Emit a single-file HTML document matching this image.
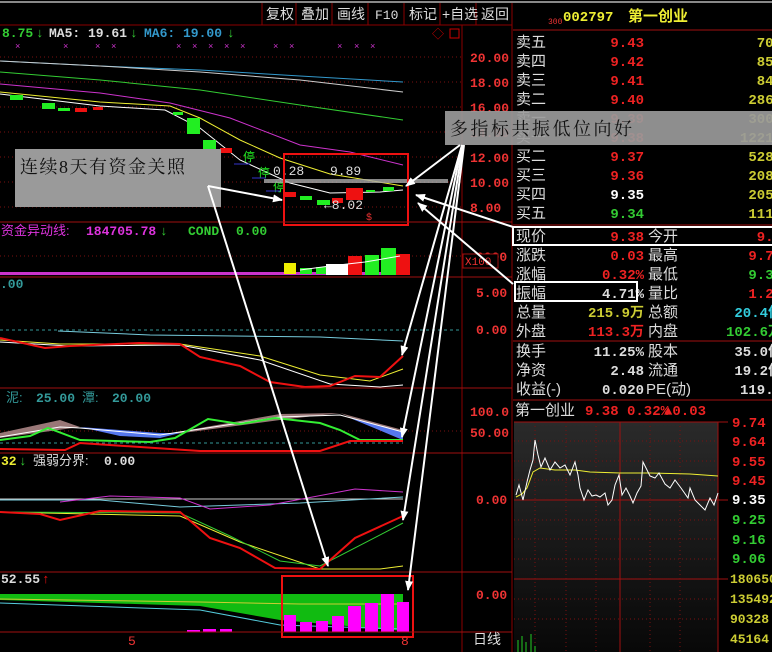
<!DOCTYPE html>
<html><head><meta charset="utf-8"><style>
html,body{margin:0;padding:0;background:#000;width:772px;height:652px;overflow:hidden}
svg{display:block;font-family:"Liberation Mono","Noto Sans CJK SC",monospace}
.c{font-family:"Liberation Sans","Noto Sans CJK SC",sans-serif}
</style></head><body>
<svg width="772" height="652" viewBox="0 0 772 652" font-size="13" xmlns="http://www.w3.org/2000/svg">
<rect width="772" height="652" fill="#000"/>
<line x1="0" y1="2" x2="772" y2="2" stroke="#888" stroke-width="2"/>
<line x1="0" y1="25" x2="512" y2="25" stroke="#8b0000"/>
<g stroke="#8b0000"><line x1="262" y1="3" x2="262" y2="25"/><line x1="296" y1="3" x2="296" y2="25"/><line x1="332" y1="3" x2="332" y2="25"/><line x1="368" y1="3" x2="368" y2="25"/><line x1="404" y1="3" x2="404" y2="25"/><line x1="440" y1="3" x2="440" y2="25"/><line x1="476" y1="3" x2="476" y2="25"/><line x1="512" y1="3" x2="512" y2="652"/><line x1="462" y1="25" x2="462" y2="652"/></g>
<g fill="#ddd" font-size="14"><text x="266" y="19" class="c">复权</text><text x="301" y="19" class="c">叠加</text><text x="337" y="19" class="c">画线</text><text x="375" y="19" font-size="13">F10</text><text x="409" y="19" class="c">标记</text><text x="442" y="19" class="c">+自选</text><text x="481" y="19" class="c">返回</text></g>
<text x="2" y="37" fill="#3c3" font-weight="bold">8.75</text><text x="36" y="37" fill="#3c3">↓</text>
<text x="49" y="37" fill="#ddd" font-weight="bold">MA5: 19.61</text><text x="130" y="37" fill="#3c3">↓</text>
<text x="144" y="37" fill="#39c" font-weight="bold">MA6: 19.00</text><text x="227" y="37" fill="#3c3">↓</text>
<text x="432" y="38" fill="#c00" font-size="12">◇</text><rect x="450" y="29" width="9" height="9" fill="none" stroke="#c00"/>
<g fill="#c3c" font-size="9"><text x="15" y="49">×</text><text x="63" y="49">×</text><text x="95" y="49">×</text><text x="111" y="49">×</text><text x="176" y="49">×</text><text x="192" y="49">×</text><text x="208" y="49">×</text><text x="224" y="49">×</text><text x="240" y="49">×</text><text x="273" y="49">×</text><text x="289" y="49">×</text><text x="337" y="49">×</text><text x="354" y="49">×</text><text x="370" y="49">×</text></g>
<g stroke="#7a1010" stroke-dasharray="1,3"><line x1="0" y1="57" x2="462" y2="57"/><line x1="0" y1="82" x2="462" y2="82"/><line x1="0" y1="107" x2="462" y2="107"/><line x1="0" y1="132" x2="462" y2="132"/><line x1="0" y1="157" x2="462" y2="157"/><line x1="0" y1="182" x2="462" y2="182"/><line x1="0" y1="207" x2="462" y2="207"/></g>
<g fill="#e33" font-weight="bold"><text x="470" y="62">20.00</text><text x="470" y="87">18.00</text><text x="470" y="112">16.00</text><text x="470" y="137">14.00</text><text x="470" y="162">12.00</text><text x="470" y="187">10.00</text><text x="470" y="212">8.00</text></g>
<polyline points="0,61 100,66 200,70 300,76 403,82" fill="none" stroke="#39c"/>
<polyline points="0,61 100,66 200,72 300,80 403,92" fill="none" stroke="#ccc"/>
<polyline points="0,72 100,80 200,90 300,105 403,120" fill="none" stroke="#3c3"/>
<polyline points="0,84 100,93 170,103 230,118 300,145 350,152 403,165" fill="none" stroke="#c3c"/>
<polyline points="0,92 100,102 170,106 200,118 240,140 280,158 330,174 403,186" fill="none" stroke="#ee3"/>
<polyline points="0,94 100,106 165,110 200,128 240,160 290,183 330,193 380,192 403,190" fill="none" stroke="#fff"/>
<g fill="#2e2"><rect x="10" y="95" width="13" height="5"/><rect x="42" y="103" width="13" height="6"/><rect x="58" y="108" width="12" height="3"/><rect x="187" y="118" width="13" height="16"/><rect x="203" y="140" width="13" height="10"/><rect x="173" y="112" width="10" height="3"/><rect x="300" y="196" width="12" height="4"/><rect x="317" y="200" width="13" height="5"/><rect x="383" y="187" width="11" height="4"/><rect x="366" y="190" width="9" height="2"/></g>
<g fill="#e11"><rect x="75" y="108" width="12" height="4"/><rect x="93" y="107" width="10" height="3"/><rect x="220" y="148" width="12" height="5"/><rect x="284" y="192" width="12" height="5"/><rect x="332" y="198" width="11" height="5"/><rect x="346" y="188" width="17" height="12"/></g>
<g fill="#2e2" font-size="12"><text x="243" y="161" class="c">停</text><text x="258" y="177" class="c">停</text><text x="273" y="191" class="c">停</text></g>
<line x1="234" y1="164" x2="250" y2="164" stroke="#33c"/><line x1="252" y1="178" x2="266" y2="178" stroke="#33c"/><line x1="266" y1="191" x2="280" y2="191" stroke="#33c"/>
<rect x="264" y="179" width="184" height="4" fill="#aaa" opacity=".8"/>
<text x="273" y="175" fill="#ddd">0.28</text><text x="330" y="175" fill="#ddd">9.89</text><text x="324" y="209" fill="#ddd">←8.02</text>
<text x="366" y="220" fill="#e33" font-size="10">$</text>
<rect x="284" y="154" width="124" height="71" fill="none" stroke="#e11" stroke-width="2"/>
<line x1="0" y1="222" x2="512" y2="222" stroke="#a01010"/>
<text x="1" y="235" fill="#d3d" class="c">资金异动线:</text><text x="86" y="235" fill="#d3d" font-weight="bold">184705.78</text><text x="160" y="235" fill="#3c3">↓</text>
<text x="188" y="235" fill="#3c3" font-weight="bold">COND</text><text x="236" y="235" fill="#3c3" font-weight="bold">0.00</text>
<line x1="0" y1="256" x2="462" y2="256" stroke="#7a1010" stroke-dasharray="1,3"/>
<rect x="0" y="272" width="405" height="3" fill="#c3c"/>
<rect x="284" y="263" width="12" height="11" fill="#ee0"/><rect x="300" y="268" width="12" height="6" fill="#2e2"/><rect x="316" y="267" width="12" height="7" fill="#2e2"/><rect x="326" y="264" width="24" height="11" fill="#fff"/><rect x="348" y="256" width="14" height="19" fill="#e11"/><rect x="365" y="255" width="14" height="20" fill="#2e2"/><rect x="381" y="248" width="15" height="27" fill="#2e2"/><rect x="396" y="254" width="14" height="21" fill="#e11"/>
<polyline points="300,270 330,266 365,262 400,256" fill="none" stroke="#fff"/>
<text x="476" y="261" fill="#e33" font-weight="bold">0000</text>
<rect x="463" y="254" width="35" height="14" fill="#000" stroke="#a01010"/><text x="465" y="265" fill="#e33" font-size="11">X100</text>
<line x1="0" y1="277" x2="512" y2="277" stroke="#a01010"/>
<text x="0" y="288" fill="#399" font-weight="bold">.00</text>
<text x="476" y="297" fill="#e33" font-weight="bold">5.00</text><text x="476" y="334" fill="#e33" font-weight="bold">0.00</text>
<line x1="0" y1="330" x2="462" y2="330" stroke="#399" stroke-dasharray="3,3"/>
<polyline points="58,331 150,335 320,337 403,341" fill="none" stroke="#7cd"/>
<polyline points="0,340 60,344 180,344 260,356 320,375 370,381 403,369" fill="none" stroke="#ee3"/>
<polyline points="0,342 70,346 180,345 260,360 330,384 380,387 403,385" fill="none" stroke="#fff"/>
<polyline points="0,338 45,348 70,346 140,343 180,344 200,357 240,366 270,382 305,387 330,386 355,376 380,377 403,356" fill="none" stroke="#e11" stroke-width="2"/>
<line x1="0" y1="388" x2="512" y2="388" stroke="#a01010"/>
<text x="6" y="402" fill="#399" class="c">泥:</text><text x="36" y="402" fill="#399" font-weight="bold">25.00</text><text x="82" y="402" fill="#399" class="c">潭:</text><text x="112" y="402" fill="#399" font-weight="bold">20.00</text>
<text x="470" y="416" fill="#e33" font-weight="bold">100.0</text><text x="470" y="437" fill="#e33" font-weight="bold">50.00</text>
<line x1="0" y1="431" x2="462" y2="431" stroke="#7a1010" stroke-dasharray="1,3"/>
<polygon points="0,433 60,420 80,427 160,435 280,414 340,413 403,430 403,440 340,413 280,420 160,436 80,427 0,438" fill="#977"/>
<polygon points="80,427 120,436 160,438 180,433 160,433" fill="#57e"/>
<polygon points="340,415 403,432 403,440 345,416" fill="#57e"/>
<polyline points="0,437 60,427 80,428 160,435 280,417 340,415 403,432" fill="none" stroke="#fff"/>
<polyline points="0,440 30,436 48,428 80,440 150,442 175,438 208,419 240,424 275,418 320,423 340,430 360,440 403,440" fill="none" stroke="#3e3" stroke-width="2"/>
<line x1="0" y1="443" x2="403" y2="443" stroke="#399" stroke-dasharray="3,3"/>
<polyline points="0,449 65,450 80,443 200,451 320,451 350,441 403,441" fill="none" stroke="#e11" stroke-width="2"/>
<line x1="0" y1="453" x2="512" y2="453" stroke="#a01010"/>
<text x="1" y="465" fill="#ee3" font-weight="bold">32</text><text x="19" y="465" fill="#3c3">↓</text><text x="33" y="465" fill="#ddd" class="c">强弱分界:</text><text x="104" y="465" fill="#ddd" font-weight="bold">0.00</text>
<text x="476" y="504" fill="#e33" font-weight="bold">0.00</text>
<line x1="0" y1="499" x2="403" y2="499" stroke="#ccc"/>
<polyline points="0,500 100,500 180,507 300,503 403,497" fill="none" stroke="#7cd"/>
<polyline points="60,502 110,496 180,498 210,509 270,505 355,489 403,492" fill="none" stroke="#c3c"/>
<polyline points="0,512 180,516 240,542 320,569 340,569 380,569 403,566" fill="none" stroke="#ee3"/>
<polyline points="0,512 180,513 230,536 280,561 320,566 403,523" fill="none" stroke="#3c3"/>
<polyline points="0,512 40,514 60,520 100,511 180,512 210,538 240,548 275,568 320,569 355,538 403,516" fill="none" stroke="#e11" stroke-width="2"/>
<line x1="0" y1="572" x2="512" y2="572" stroke="#a01010"/>
<text x="1" y="583" fill="#ddd" font-weight="bold">52.55</text><text x="42" y="583" fill="#e11">↑</text>
<text x="476" y="599" fill="#e33" font-weight="bold">0.00</text>
<polygon points="0,594 403,594 403,631 280,620 200,606 0,600" fill="#1b1"/>
<polyline points="0,599 200,602 300,604 403,604" fill="none" stroke="#cc3"/>
<polyline points="0,603 200,610 280,625 403,629" fill="none" stroke="#5cd"/>
<g fill="#f0f"><rect x="284" y="615" width="12" height="17"/><rect x="300" y="622" width="12" height="10"/><rect x="316" y="621" width="12" height="11"/><rect x="332" y="616" width="12" height="16"/><rect x="348" y="606" width="13" height="26"/><rect x="365" y="603" width="13" height="29"/><rect x="381" y="594" width="13" height="38"/><rect x="397" y="602" width="12" height="30"/><rect x="187" y="630" width="13" height="2"/><rect x="203" y="629" width="13" height="3"/><rect x="220" y="629" width="12" height="3"/></g>
<rect x="282" y="576" width="131" height="61" fill="none" stroke="#e11" stroke-width="2"/>
<line x1="0" y1="632" x2="512" y2="632" stroke="#a01010"/>
<text x="128" y="645" fill="#e33">5</text><text x="401" y="645" fill="#e33">8</text><text x="473" y="644" fill="#ddd" class="c" font-size="14">日线</text>
<line x1="513" y1="30" x2="772" y2="30" stroke="#a01010"/>
<text x="548" y="24" fill="#e33" font-size="8">300</text><text x="563" y="21" fill="#ee3" font-weight="bold" font-size="14">002797</text><text x="628" y="21" fill="#ee3" class="c" font-weight="bold" font-size="15">第一创业</text>
<g fill="#ddd" font-size="15"><g class="c"><text x="516" y="47">卖五</text><text x="516" y="66">卖四</text><text x="516" y="85">卖三</text><text x="516" y="104">卖二</text><text x="516" y="123">卖一</text><text x="516" y="142">买一</text><text x="516" y="161">买二</text><text x="516" y="180">买三</text><text x="516" y="199">买四</text><text x="516" y="218">买五</text>
<text x="516" y="241">现价</text><text x="516" y="260">涨跌</text><text x="516" y="279">涨幅</text><text x="516" y="298">振幅</text><text x="516" y="317">总量</text><text x="516" y="336">外盘</text>
<text x="648" y="241">今开</text><text x="648" y="260">最高</text><text x="648" y="279">最低</text><text x="648" y="298">量比</text><text x="648" y="317">总额</text><text x="648" y="336">内盘</text>
<text x="516" y="356">换手</text><text x="516" y="375">净资</text><text x="516" y="394">收益(-)</text><text x="648" y="356">股本</text><text x="648" y="375">流通</text><text x="646" y="394">PE(动)</text></g></g>
<g font-size="14" font-weight="bold" text-anchor="end"><g fill="#e22"><text x="644" y="47">9.43</text><text x="644" y="66">9.42</text><text x="644" y="85">9.41</text><text x="644" y="104">9.40</text><text x="644" y="123">9.39</text><text x="644" y="142">9.38</text><text x="644" y="161">9.37</text><text x="644" y="180">9.36</text><text x="644" y="241">9.38</text><text x="644" y="260">0.03</text><text x="644" y="279">0.32%</text><text x="644" y="336">113.3万</text><text x="782" y="241">9.3</text><text x="782" y="260">9.74</text><text x="782" y="298">1.24</text></g>
<text x="644" y="199" fill="#fff">9.35</text><text x="644" y="218" fill="#3c3">9.34</text><text x="644" y="298" fill="#ddd">4.71%</text><text x="644" y="317" fill="#cc3">215.9万</text>
<g fill="#cc3"><text x="782" y="47">700</text><text x="782" y="66">854</text><text x="782" y="85">844</text><text x="782" y="104">2861</text><text x="782" y="123">3000</text><text x="782" y="142">12211</text><text x="782" y="161">5283</text><text x="782" y="180">2083</text><text x="782" y="199">2057</text><text x="782" y="218">1111</text></g>
<text x="782" y="279" fill="#3c3">9.30</text><text x="782" y="317" fill="#3cd">20.4亿</text><text x="782" y="336" fill="#3c3">102.6万</text>
<g fill="#ddd"><text x="644" y="356">11.25%</text><text x="644" y="375">2.48</text><text x="644" y="394">0.020</text><text x="782" y="356">35.0亿</text><text x="782" y="375">19.2亿</text><text x="782" y="394">119.7</text></g></g>
<line x1="513" y1="225" x2="772" y2="225" stroke="#a01010"/><line x1="513" y1="341" x2="772" y2="341" stroke="#a01010"/><line x1="513" y1="400" x2="772" y2="400" stroke="#a01010"/>
<rect x="513" y="227" width="262" height="18" fill="none" stroke="#fff" stroke-width="2"/>
<rect x="515" y="282" width="122" height="19" fill="none" stroke="#fff" stroke-width="2"/>
<text x="515" y="415" fill="#ddd" class="c" font-size="15">第一创业</text><text x="585" y="415" fill="#e22" font-weight="bold" font-size="14">9.38 0.32%</text><text x="664" y="415" fill="#e22" font-weight="bold" font-size="14">▲0.03</text>
<defs><linearGradient id="g" x1="0" y1="0" x2="0" y2="1"><stop offset="0" stop-color="#2a2a2a"/><stop offset="1" stop-color="#080808"/></linearGradient></defs>
<rect x="514" y="422" width="204" height="230" fill="url(#g)"/>
<line x1="514" y1="422" x2="728" y2="422" stroke="#a01010"/><line x1="620" y1="422" x2="620" y2="652" stroke="#a01010"/><line x1="718" y1="422" x2="718" y2="652" stroke="#a01010"/>
<line x1="514" y1="500" x2="728" y2="500" stroke="#a01010"/><line x1="514" y1="579" x2="728" y2="579" stroke="#a01010"/>
<g stroke="#7a1010" stroke-dasharray="1,3"><line x1="514" y1="441" x2="718" y2="441"/><line x1="514" y1="461" x2="718" y2="461"/><line x1="514" y1="480" x2="718" y2="480"/><line x1="514" y1="520" x2="718" y2="520"/><line x1="514" y1="539" x2="718" y2="539"/><line x1="514" y1="559" x2="718" y2="559"/><line x1="514" y1="599" x2="718" y2="599"/><line x1="514" y1="619" x2="718" y2="619"/><line x1="535" y1="422" x2="535" y2="652"/><line x1="566" y1="422" x2="566" y2="652"/><line x1="596" y1="422" x2="596" y2="652"/><line x1="650" y1="422" x2="650" y2="652"/><line x1="680" y1="422" x2="680" y2="652"/></g>
<polyline points="516,497 522,494 527,488 533,472 540,468 555,470 575,470 590,472 620,473 650,473 690,474 718,476" fill="none" stroke="#ee3"/>
<polyline points="516,495 519,485 523,500 527,482 530,470 533,460 535,440 538,455 541,467 545,458 550,470 555,462 560,468 565,465 570,475 575,462 578,475 580,488 584,500 588,490 592,496 596,495 600,497 605,493 608,505 612,500 615,485 619,475 622,495 626,488 630,496 633,503 637,493 641,486 643,462 647,470 650,476 655,478 659,473 665,484 670,488 675,480 681,488 688,498 690,488 695,500 700,505 705,510 710,498 714,505 718,493" fill="none" stroke="#fff"/>
<g font-weight="bold" font-size="14"><text x="732" y="427" fill="#e22">9.74</text><text x="732" y="446" fill="#e22">9.64</text><text x="732" y="466" fill="#e22">9.55</text><text x="732" y="485" fill="#e22">9.45</text><text x="732" y="504" fill="#fff">9.35</text><text x="732" y="524" fill="#3c3">9.25</text><text x="732" y="544" fill="#3c3">9.16</text><text x="732" y="563" fill="#3c3">9.06</text><text x="730" y="583" fill="#cc3" font-size="13">180650</text><text x="730" y="603" fill="#cc3" font-size="13">135492</text><text x="730" y="623" fill="#cc3" font-size="13">90328</text><text x="730" y="643" fill="#cc3" font-size="13">45164</text></g>
<g stroke="#2c2"><line x1="518" y1="652" x2="518" y2="640"/><line x1="522" y1="652" x2="522" y2="636"/><line x1="526" y1="652" x2="526" y2="642"/><line x1="531" y1="652" x2="531" y2="634"/><line x1="535" y1="652" x2="535" y2="646"/></g>
<rect x="15" y="149" width="206" height="58" fill="#9a9a9a"/>
<text x="20" y="173" fill="#111" font-size="18" letter-spacing="1.5" font-family="Liberation Serif,Noto Serif CJK SC,serif">连续8天有资金关照</text>
<rect x="445" y="111" width="327" height="34" fill="#9a9a9a" opacity=".92"/>
<text x="450" y="135" fill="#111" font-size="18" letter-spacing="2.5" font-family="Liberation Serif,Noto Serif CJK SC,serif">多指标共振低位向好</text>
<defs><marker id="a" markerWidth="10" markerHeight="8" refX="9" refY="4" orient="auto" markerUnits="userSpaceOnUse"><polygon points="0,0 10,4 0,8" fill="#fff"/></marker></defs>
<g stroke="#fff" stroke-width="2" fill="none" marker-end="url(#a)">
<line x1="208" y1="186" x2="282" y2="200"/><line x1="208" y1="186" x2="328" y2="566"/>
<line x1="460" y1="145" x2="406" y2="186"/><line x1="462" y1="145" x2="402" y2="355"/><line x1="462" y1="145" x2="402" y2="437"/><line x1="463" y1="145" x2="403" y2="520"/><line x1="464" y1="145" x2="408" y2="590"/>
<line x1="513" y1="227" x2="416" y2="195"/><line x1="513" y1="284" x2="418" y2="203"/>
</g>
</svg>
</body></html>
